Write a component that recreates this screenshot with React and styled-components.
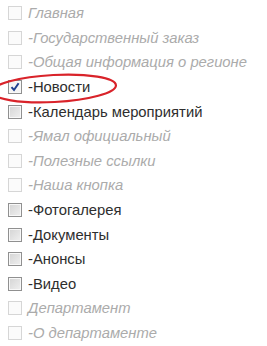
import React from 'react';
import styled, { createGlobalStyle } from 'styled-components';

const GlobalStyle = createGlobalStyle`
  html, body {
    margin: 0;
    padding: 0;
    background: #ffffff;
  }
`;

const List = styled.ul`
  position: relative;
  list-style: none;
  margin: 0;
  padding: 1px 0 0 8px;
  font-family: "Liberation Sans", Arial, sans-serif;
`;

const Row = styled.li`
  display: flex;
  align-items: center;
  height: 24.6px;
  gap: 6px;
`;

const Box = styled.span`
  position: relative;
  box-sizing: border-box;
  width: 14px;
  height: 14px;
  flex: none;
  border: 1px solid ${p => (p.$disabled ? '#d6d6d6' : '#909090')};
  background: ${p =>
    p.$disabled
      ? '#fbfbfb'
      : p.$checked
      ? '#f4f4f4'
      : 'linear-gradient(135deg, #d4d4d4 0%, #f0f0f0 100%)'};
  box-shadow: ${p => (p.$disabled ? 'none' : 'inset 0 0 0 1px #f8f8f8')};
`;

const Check = styled.svg`
  position: absolute;
  left: 1px;
  top: 1px;
`;

const Label = styled.span`
  font-size: 14.8px;
  line-height: 16px;
  white-space: nowrap;
  color: ${p => (p.$disabled ? '#ababab' : '#2e2e2e')};
  font-style: ${p => (p.$disabled ? 'italic' : 'normal')};
`;

const Ring = styled.svg`
  position: absolute;
  left: 0;
  top: 70px;
  overflow: visible;
  pointer-events: none;
`;

const items = [
  { text: 'Главная', disabled: true },
  { text: '-Государственный заказ', disabled: true },
  { text: '-Общая информация о регионе', disabled: true },
  { text: '-Новости', checked: true },
  { text: '-Календарь мероприятий' },
  { text: '-Ямал официальный', disabled: true },
  { text: '-Полезные ссылки', disabled: true },
  { text: '-Наша кнопка', disabled: true },
  { text: '-Фотогалерея' },
  { text: '-Документы' },
  { text: '-Анонсы' },
  { text: '-Видео' },
  { text: 'Департамент', disabled: true },
  { text: '-О департаменте', disabled: true },
];

const App = () => (
  <>
    <GlobalStyle />
    <List>
      {items.map(item => (
        <Row key={item.text}>
          <Box $disabled={item.disabled} $checked={item.checked}>
            {item.checked && (
              <Check width="10" height="10" viewBox="0 0 10 10">
                <path d="M1.5 5.2 L4 8 L8.6 1.2" fill="none" stroke="#1f3f8f" strokeWidth="2" />
              </Check>
            )}
          </Box>
          <Label $disabled={item.disabled}>{item.text}</Label>
        </Row>
      ))}
      <Ring width="130" height="36" viewBox="0 0 130 36">
        <ellipse
          cx="54"
          cy="18.5"
          rx="62"
          ry="13.5"
          transform="rotate(-3 54 18.5)"
          fill="none"
          stroke="#d9232a"
          strokeWidth="2.2"
        />
      </Ring>
    </List>
  </>
);

export default App;
